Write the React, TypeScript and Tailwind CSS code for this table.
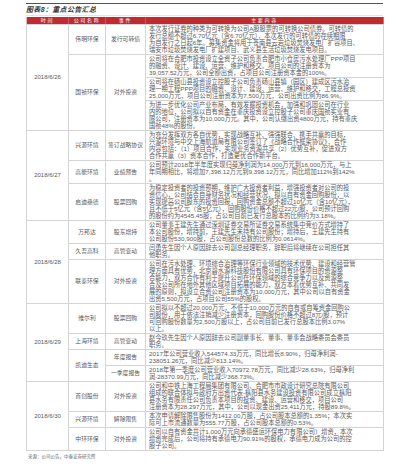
import React from 'react';

// NOTE: the page is drawn at 3x and scaled down, so that the very small
// text of the reference keeps its proportions.

type Row = {
  company?: string;
  companySpan?: number;
  event?: string;
  eventSpan?: number;
  lines: string[];
};

type Group = {
  date: string;
  rows: Row[];
};

const groups: Group[] = [
  {
    date: '2018/6/26',
    rows: [
      {
        company: '伟明环保',
        event: '发行可转债',
        lines: [
          '本次发行证券的种类为可转换为公司A股股票的可转换公司债券。可转债的',
          '发行总额不超过6.70亿元（含6.70亿元），本次发行的可转债的存续期限',
          '为自发行之日起6年。募集资金将用于苍南县云岩垃圾焚烧发电厂扩容项目、',
          '瑞安市垃圾焚烧发电厂扩建项目、武义县生活垃圾焚烧发电项目。',
        ],
      },
      {
        company: '国祯环保',
        companySpan: 3,
        event: '对外投资',
        eventSpan: 3,
        lines: [
          '公司将在合肥市投资设立全资子公司负责合肥市小仓房污水处理厂PPP项目',
          '的融资、设计、建设、运营、维护和移交。项目公司的注册资本为',
          '39,057.52万元，公司全额出资，占项目公司注册资本金的100%。',
        ],
      },
      {
        lines: [
          '公司将在砀山县投资设立控股子公司负责砀山县镇（园区）建成区污水治',
          '理一期工程PPP项目的融资、设计、建设、运营、维护和移交，工程总投资',
          '25,000万元，项目公司注册资本为7,500万元，公司出资比例为86.9%。',
        ],
      },
      {
        lines: [
          '为进一步优化公司产业布局，有效发掘投资机会，加强和巩固公司在行业',
          '内的地位，公司拟以自有资金在重庆投资设立控股子公司重庆国祯实业有',
          '限公司，注册资本为10,000万元。其中，公司认缴出资4800万元，持有重庆',
          '国祯48%的股份。',
        ],
      },
    ],
  },
  {
    date: '2018/6/27',
    rows: [
      {
        company: '兴源环境',
        event: '签订战略协议',
        lines: [
          '为充分发挥双方各自优势，实现战略互补、强强联合、携手共赢的目标，',
          '兴源环境与中交上海航道局有限公司签订了《战略合作框架协议》，合作',
          '内容包括：（1）项目合作，实现业务资源共享（2）优势互补，促进双方',
          '合作共赢（3）资本合作，打造更优合作新平台。',
        ],
      },
      {
        company: '高能环境',
        event: '业绩预告',
        lines: [
          '公司预计2018年半年度实现归母净利润为14,000万元到16,000万元，与上',
          '年同期相比，将增加7,398.12万元到9,398.12万元，同比增加112%到142%',
          '。',
        ],
      },
      {
        company: '启迪桑德',
        event: '股票回购',
        lines: [
          '为稳定投资者的投资预期，维护广大投资者利益，增强投资者对公司的投',
          '资信心，公司结合自身财务状况和经营状况，拟以自有资金回购股份，以',
          '实现提高公司股东的投资回报，回购资金总额不超过10亿元（含10亿元），',
          '且不低于5亿元（含5亿元），回购股份价格不超过22元/股，公司预计回购',
          '的股份约为4545.45股，占公司目前已发行总股本的比例约为3.18%。',
        ],
      },
    ],
  },
  {
    date: '2018/6/28',
    rows: [
      {
        company: '万邦达',
        event: '股东增持',
        lines: [
          '公司董事王建先生通过深圳证券交易所证券交易系统集中竞价方式增持了',
          '本公司股份，增持前，王建先生未持有公司股份；增持后，王建先生持有',
          '公司股份530,900股，占公司股份总数的比例为0.0614%。',
        ],
      },
      {
        company: '久吾高科',
        event: '高管变动',
        lines: [
          '闫勇先生因个人原因辞去公司副总经理职务，辞职后将继续在公司担任其',
          '他职务。',
        ],
      },
      {
        company: '联泰环保',
        event: '对外投资',
        lines: [
          '公司在污水处理、环境综合治理等环保行业领域的技术优势、建设和经营管',
          '理方面具有优势，北京碧水源科技股份有限公司具有环保项目的资源整',
          '合能力，双方合作有利于提升公司在环保领域的综合竞争力以及资源整',
          '合及公司所在地外其他区域项目拓展的能力，双方本着优势互补、共同发',
          '展的原则，拟设立合资公司注册资本为10,000万元，其中公司以自有资金',
          '出资5,500万元，占项目公司55%的股权。',
        ],
      },
    ],
  },
  {
    date: '2018/6/29',
    rows: [
      {
        company: '维尔利',
        event: '股票回购',
        lines: [
          '公司拟以不超过20,000万元，不低于10,000万元的自有或自筹资金回购公',
          '司股份，用于依法注销减少注册资本，回购股份价格不超过8元/股，预计',
          '可回购股份数量为2,500万股以上，占公司目前已发行总股本比例3.07%',
          '以上。',
        ],
      },
      {
        company: '上海环境',
        event: '高管变动',
        lines: [
          '赵今玖先生因个人原因辞去公司副董事长、董事、董事会战略委员会委员',
          '职务。',
        ],
      },
      {
        company: '凯迪生态',
        companySpan: 2,
        event: '年度报告',
        lines: [
          '2017年公司营业收入544574.33万元，同比增长8.90%，归母净利润-',
          '238051.26元，同比减少813.14%。',
        ],
      },
      {
        event: '一季度报告',
        lines: [
          '2018年第一季度公司营业收入70972.78万元，同比减少28.63%，归母净利',
          '润-28370.99万元，同比减少368.73%。',
        ],
      },
    ],
  },
  {
    date: '2018/6/30',
    rows: [
      {
        company: '首创股份',
        event: '对外投资',
        lines: [
          '公司和中铁上海工程局集团有限公司、合肥市市政设计研究总院有限公司',
          '组成的联合体拟与政府方出资代表-枞阳县水务建设投资有限公司成立枞阳',
          '县水务有限责任公司负责本项目的投资、建设、运营和移交，项目公司',
          '注册资本为28,297万元，其中，公司以现金出资25,411万元，持股89.8%。',
        ],
      },
      {
        company: '兴源环境',
        event: '解除限售',
        lines: [
          '本次申请解除限售股份为1412.00万股，占公司股本总额的1.35%；本次实',
          '际可上市流通数量为555.77万股，占公司股本总额的0.53%。',
        ],
      },
      {
        company: '中环环保',
        event: '对外投资',
        lines: [
          '公司以自有资金共计1,000万元向承德盛运环保电力有限公司）增资，本次',
          '增资完成后，公司将持有承德电力90.91%的股权，承德电力成为公司的控',
          '股子公司。',
        ],
      },
    ],
  },
];

const cell = 'border-[3px] border-[#d4d4d4] align-middle';

export default function App() {
  return (
    <div className="w-[400px] h-[470px] bg-white overflow-hidden">
      <div className="w-[1200px] h-[1410px] origin-top-left scale-[0.33333] font-['Liberation_Sans','Noto_Sans_CJK_SC',sans-serif] text-[#5a5a5a]">
        <div className="ml-[78px] w-[1071px] pt-[9px]">
          <div className="h-[3px] bg-[#c0262d]" />
          <div className="h-[36px] flex items-center border-b-[3px] border-[#e4e4e4] mb-[3px]">
            <span className="text-[21px] leading-[24px] font-bold italic text-[#333] tracking-[1px]">
              图表8：重点公告汇总
            </span>
          </div>

          <table className="w-[1071px] table-fixed border-collapse">
            <colgroup>
              <col className="w-[126px]" />
              <col className="w-[111px]" />
              <col className="w-[120px]" />
              <col className="w-[714px]" />
            </colgroup>
            <thead>
              <tr className="bg-[#bf2b2f] text-white h-[22px]">
                <th className="text-[15px] leading-[20px] font-normal tracking-[5px]">时间</th>
                <th className="text-[15px] leading-[20px] font-normal tracking-[5px]">公司名称</th>
                <th className="text-[15px] leading-[20px] font-normal tracking-[5px]">事件</th>
                <th className="text-[15px] leading-[20px] font-normal tracking-[5px]">主要内容</th>
              </tr>
            </thead>
            <tbody>
              {groups.map((g) =>
                g.rows.map((r, i) => (
                  <tr key={g.date + i}>
                    {i === 0 && (
                      <td rowSpan={g.rows.length} className={`${cell} text-center text-[18px] leading-[21px]`}>
                        {g.date}
                      </td>
                    )}
                    {r.company !== undefined && (
                      <td rowSpan={r.companySpan ?? 1} className={`${cell} text-center text-[17.5px] leading-[21px]`}>
                        {r.company}
                      </td>
                    )}
                    {r.event !== undefined && (
                      <td rowSpan={r.eventSpan ?? 1} className={`${cell} text-center text-[17.5px] leading-[21px] whitespace-nowrap`}>
                        {r.event}
                      </td>
                    )}
                    <td className={`${cell} px-[9px] py-[1.5px] text-[18.8px] leading-[21px] whitespace-nowrap overflow-hidden`}>
                      {r.lines.map((l, k) => (
                        <div key={k}>{l}</div>
                      ))}
                    </td>
                  </tr>
                ))
              )}
            </tbody>
          </table>

          <div className="mt-[9px] ml-[6px] text-[13.5px] leading-[18px] text-[#666]">
            来源：公司公告，中泰证券研究所
          </div>
        </div>
      </div>
    </div>
  );
}
